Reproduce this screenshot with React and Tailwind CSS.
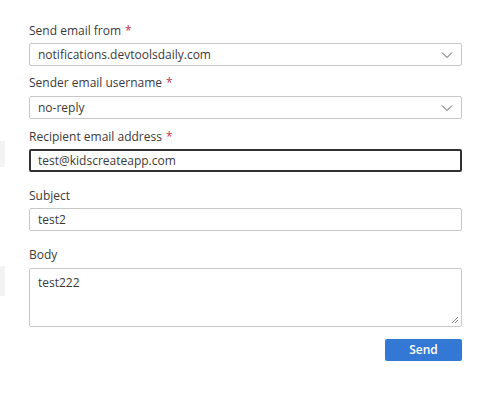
import React from 'react';

const font = { fontFamily: '"Open Sans", "Noto Sans", sans-serif' };

const Chevron = () => (
    <svg width="12" height="8" viewBox="0 0 12 8" className="absolute right-[8px] top-1/2 -translate-y-1/2">
        <path d="M1 1.5 L6 6.5 L11 1.5" fill="none" stroke="#555" strokeWidth="1" />
    </svg>
);

const Label = ({ children, required }) => (
    <div className="h-[20px] leading-[20px] text-[12px] text-[#3b3a39]">
        {children}
        {required && <span className="ml-[4px] text-[#c4314b]">*</span>}
    </div>
);

const SelectBox = ({ value }) => (
    <div className="relative h-[23px] rounded-[2px] border border-[#c8c8c8] bg-white pl-[8px] text-[12px] leading-[21px] text-[#3b3a39]">
        {value}
        <Chevron />
    </div>
);

export default function App() {
    return (
        <div className="relative h-[414px] w-[500px] bg-white" style={font}>
            <div className="absolute left-0 top-[141px] h-[26px] w-[5px] bg-[#f3f3f3]" />
            <div className="absolute left-0 top-[266px] h-[30px] w-[5px] bg-[#f3f3f3]" />
            <div className="ml-[29px] w-[433px] pt-[21px]">
                <Label required>Send email from</Label>
                <div className="mt-[2px]">
                    <SelectBox value="notifications.devtoolsdaily.com" />
                </div>

                <div className="mt-[7px]">
                    <Label required>Sender email username</Label>
                    <div className="mt-[3px]">
                        <SelectBox value="no-reply" />
                    </div>
                </div>

                <div className="mt-[8px]">
                    <Label required>Recipient email address</Label>
                    <div className="mt-[2px] h-[23px] rounded-[2px] border-2 border-[#323130] bg-white pl-[7px] text-[12px] leading-[19px] text-[#3b3a39]">
                        test@kidscreateapp.com
                    </div>
                </div>

                <div className="mt-[14px]">
                    <Label>Subject</Label>
                    <div className="mt-[2px] h-[23px] rounded-[2px] border border-[#c8c8c8] bg-white pl-[8px] text-[12px] leading-[21px] text-[#3b3a39]">
                        test2
                    </div>
                </div>

                <div className="mt-[14px]">
                    <Label>Body</Label>
                    <div className="relative mt-[3px] h-[59px] rounded-[2px] border border-[#c8c8c8] bg-white px-[8px] pt-[5px] text-[12px] leading-[18px] text-[#3b3a39]">
                        test222
                        <svg width="8" height="8" viewBox="0 0 8 8" className="absolute bottom-[2px] right-[2px]">
                            <path d="M7 1 L1 7 M7 4 L4 7" stroke="#888" strokeWidth="1" />
                        </svg>
                    </div>
                </div>

                <div className="mt-[12px] flex justify-end">
                    <button className="h-[22px] w-[77px] rounded-[2px] bg-[#3378d4] text-[12px] font-semibold leading-[22px] text-white">
                        Send
                    </button>
                </div>
            </div>
        </div>
    );
}
